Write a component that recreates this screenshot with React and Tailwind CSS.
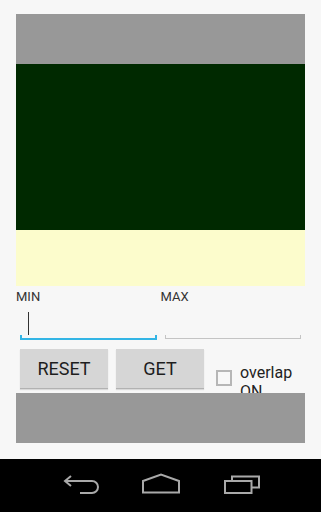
import React from 'react';

const BackIcon = () => (
  <svg width="40" height="24" viewBox="0 0 40 24" fill="none" stroke="#a9a9a9" strokeWidth="2">
    <path d="M10 4 L4 9 L10 14" />
    <path d="M4 9 H31 A6 6 0 0 1 31 21 H19" />
  </svg>
);

const HomeIcon = () => (
  <svg width="40" height="24" viewBox="0 0 40 24" fill="none" stroke="#a9a9a9" strokeWidth="2">
    <path d="M2 9 L20 2.5 L38 9 V20.5 H2 Z" />
  </svg>
);

const RecentsIcon = () => (
  <svg width="40" height="24" viewBox="0 0 40 24" fill="none" stroke="#a9a9a9" strokeWidth="2">
    <rect x="4" y="9" width="26.5" height="12" />
    <path d="M11 8.5 V4.5 H38 V15.5 H31" />
  </svg>
);

const Field = ({ active }) => (
  <div className="relative h-[35px] mx-[4px]">
    {active && <div className="absolute left-[8px] top-[7px] w-px h-[23px] bg-[#333]" />}
    <div className={`absolute left-0 right-0 bottom-0 ${active ? 'h-[2px] bg-[#33b5e5]' : 'h-px bg-[#c4c4c4] bottom-[1px]'}`} />
    <div className={`absolute left-0 bottom-0 ${active ? 'w-[2px] h-[5px] bg-[#33b5e5]' : 'w-px h-[4px] bg-[#c4c4c4] bottom-[1px]'}`} />
    <div className={`absolute right-0 bottom-0 ${active ? 'w-[2px] h-[5px] bg-[#33b5e5]' : 'w-px h-[4px] bg-[#c4c4c4] bottom-[1px]'}`} />
  </div>
);

const Btn = ({ children }) => (
  <button className="w-[88px] h-[40px] bg-[#d6d6d6] border-b border-[#b2b2b2] shadow-[0_1px_1px_rgba(0,0,0,0.12)] text-[18px] text-[#1e1e1e] leading-none">
    {children}
  </button>
);

export default function App() {
  return (
    <div className="w-[321px] h-[512px] flex flex-col bg-[#f7f7f7] overflow-hidden" style={{ fontFamily: 'Roboto, "Liberation Sans", sans-serif' }}>
      <div className="flex-1 flex flex-col px-4 pt-[14px]">
        <div className="h-[50px] bg-[#989898]" />
        <div className="h-[166px] bg-[#002900]" />
        <div className="h-[56px] bg-[#fcfccc]" />

        <div className="grid grid-cols-2">
          <div>
            <div className="pt-[2px] text-[13px] leading-[17px] text-[#333]">MIN</div>
            <Field active />
          </div>
          <div>
            <div className="pt-[2px] text-[13px] leading-[17px] text-[#333]">MAX</div>
            <Field />
          </div>
        </div>

        <div className="mt-[9px] h-[44px] flex items-start pl-[4px] overflow-hidden">
          <Btn>RESET</Btn>
          <div className="ml-[8px]">
            <Btn>GET</Btn>
          </div>
          <div className="ml-[12px] mt-[21px] w-[16px] h-[16px] border-2 border-[#b6b6b6] shrink-0" />
          <div className="ml-[8px] mt-[14px] flex-1 min-w-0 text-[16px] leading-[19px] text-[#222]">overlap ON</div>
        </div>

        <div className="h-[50px] bg-[#989898]" />
      </div>

      <div className="h-[53px] bg-black flex justify-center items-start pt-[13px]">
        <div className="w-[80px] flex justify-center"><BackIcon /></div>
        <div className="w-[80px] flex justify-center"><HomeIcon /></div>
        <div className="w-[80px] flex justify-center"><RecentsIcon /></div>
      </div>
    </div>
  );
}
